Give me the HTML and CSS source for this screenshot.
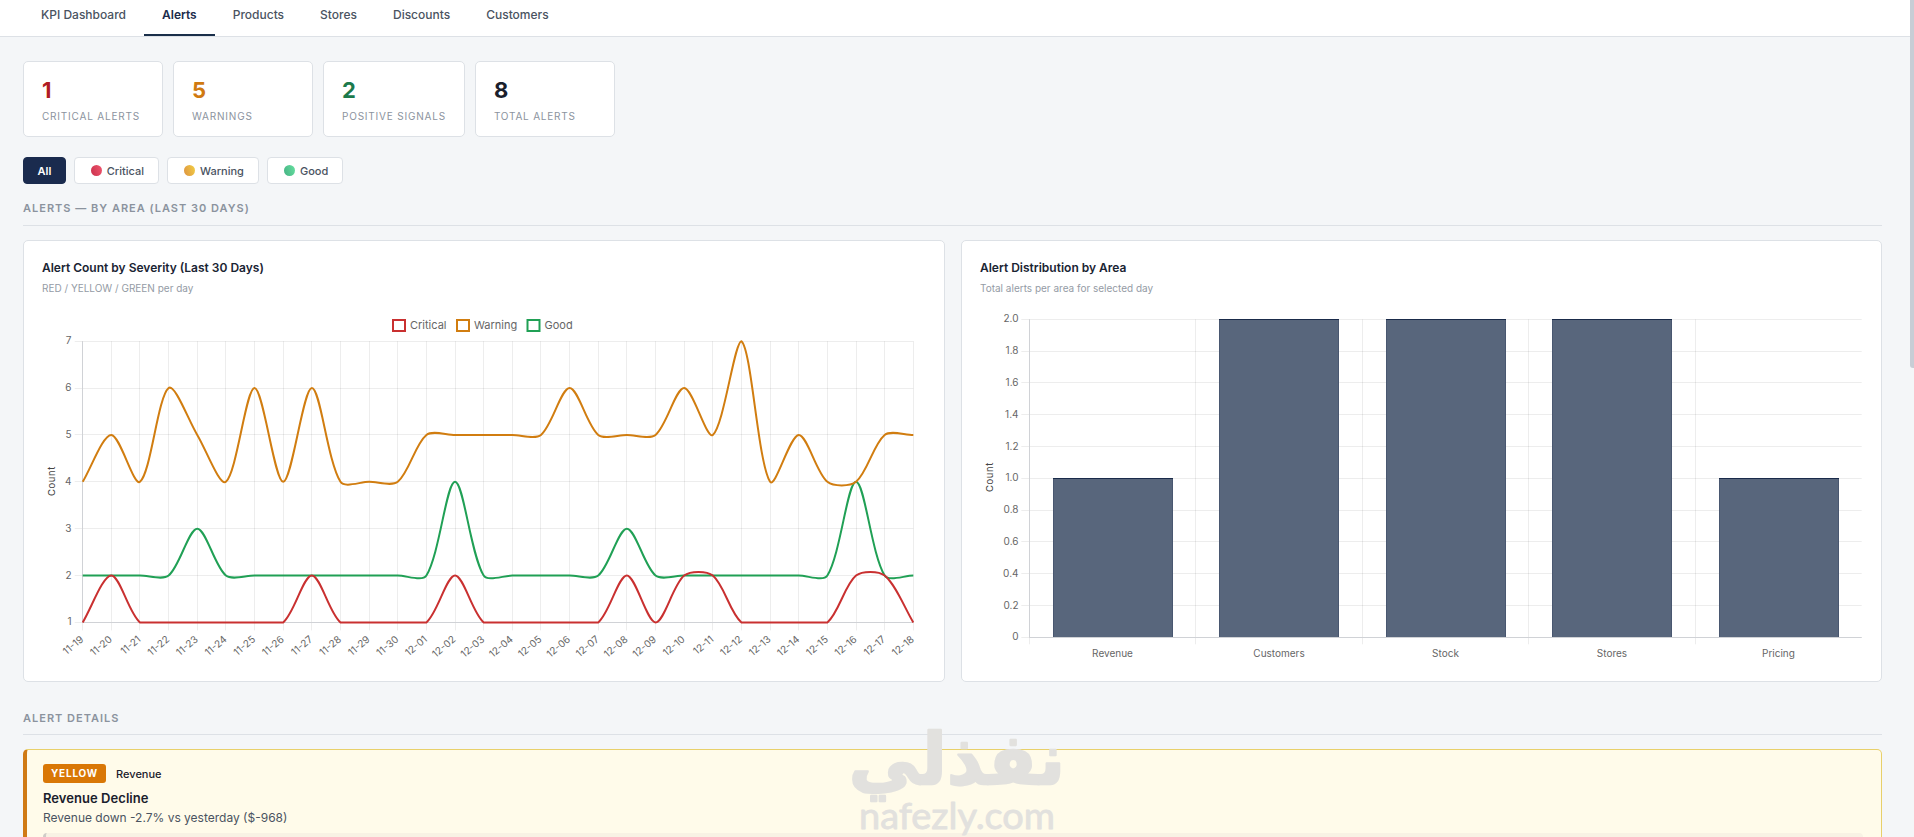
FILE: index.html
```html
<!DOCTYPE html>
<html lang="en">
<head>
  <meta charset="UTF-8" />
  <meta name="viewport" content="width=device-width, initial-scale=1.0"/>
  <title>Alerts</title>
  <link rel="stylesheet" href="styles.css">
</head>
<body>
  <nav class="tabs">
    <a class="tab">KPI Dashboard</a>
    <a class="tab active">Alerts</a>
    <a class="tab">Products</a>
    <a class="tab">Stores</a>
    <a class="tab">Discounts</a>
    <a class="tab">Customers</a>
  </nav>

  <main class="content">
    <div class="stats">
      <div class="stat">
        <div class="stat-value critical">1</div>
        <div class="stat-label">Critical Alerts</div>
      </div>
      <div class="stat">
        <div class="stat-value warning">5</div>
        <div class="stat-label">Warnings</div>
      </div>
      <div class="stat">
        <div class="stat-value good">2</div>
        <div class="stat-label">Positive Signals</div>
      </div>
      <div class="stat">
        <div class="stat-value">8</div>
        <div class="stat-label">Total Alerts</div>
      </div>
    </div>

    <div class="filters">
      <button class="filter active">All</button>
      <button class="filter"><span class="dot dot-red"></span>Critical</button>
      <button class="filter"><span class="dot dot-yellow"></span>Warning</button>
      <button class="filter"><span class="dot dot-green"></span>Good</button>
    </div>

    <h2 class="section-title">Alerts — By Area (Last 30 Days)</h2>

    <div class="charts">
      <div class="chart-card">
        <h3 class="chart-title">Alert Count by Severity (Last 30 Days)</h3>
        <p class="chart-sub">RED / YELLOW / GREEN per day</p>
        <svg class="chart" id="severityChart"></svg>
      </div>
      <div class="chart-card">
        <h3 class="chart-title">Alert Distribution by Area</h3>
        <p class="chart-sub">Total alerts per area for selected day</p>
        <svg class="chart" id="areaChart"></svg>
      </div>
    </div>

    <h2 class="section-title details-title">Alert Details</h2>

    <div class="alert-card">
      <div class="alert-head">
        <span class="badge">YELLOW</span>
        <span class="alert-area">Revenue</span>
      </div>
      <div class="alert-name">Revenue Decline</div>
      <div class="alert-text">Revenue down -2.7% vs yesterday ($-968)</div>
      <div class="alert-action"></div>
    </div>
  </main>

  <svg class="watermark" viewBox="0 0 230 160">
    <text class="wm-ar" transform="translate(115,104) scale(1.05,1.14)" text-anchor="middle" textLength="206" lengthAdjust="spacingAndGlyphs">نفذلي</text>
    <text class="wm-en" x="115" y="149" text-anchor="middle" textLength="196" lengthAdjust="spacingAndGlyphs">nafezly.com</text>
  </svg>
  <div class="scroll-thumb"></div>

  <script src="charts.js"></script>
</body>
</html>
```
FILE: styles.css
```css
* {
  box-sizing: border-box;
}
body {
  margin: 0;
  height: 837px;
  overflow: hidden;
  position: relative;
  font-family: Inter, "Liberation Sans", sans-serif;
  background: #f4f6f8;
  color: #1a202c;
}
.tabs {
  display: flex;
  height: 37px;
  padding-left: 23px;
  background: #fff;
  border-bottom: 1px solid #dde1e6;
}
.tab {
  padding: 6px 18px 10px;
  border-bottom: 2px solid transparent;
  font-size: 12px;
  font-weight: 500;
  line-height: 18px;
  color: #4a5361;
}
.tab.active {
  color: #1a2b4a;
  font-weight: 600;
  border-bottom-color: #1a2f4a;
}
.content {
  height: 800px;
  padding: 24px 32px 0 23px;
  overflow: hidden;
}
.stats {
  display: flex;
  gap: 10px;
}
.stat {
  min-width: 140px;
  height: 76px;
  padding: 14px 18px 0;
  background: #fff;
  border: 1px solid #dde1e6;
  border-radius: 5px;
}
.stat-value {
  font-size: 22px;
  font-weight: 700;
  line-height: 28px;
}
.stat-value.critical { color: #b01c24; }
.stat-value.warning { color: #d07a10; }
.stat-value.good { color: #1c7a4c; }
.stat-label {
  margin-top: 4px;
  font-size: 10px;
  line-height: 16px;
  letter-spacing: 0.8px;
  text-transform: uppercase;
  white-space: nowrap;
  color: #8b939e;
}
.filters {
  display: flex;
  gap: 8px;
  margin-top: 20px;
}
.filter {
  display: flex;
  align-items: center;
  height: 27px;
  padding: 0 14px;
  background: #fff;
  border: 1px solid #dde1e6;
  border-radius: 4px;
  font-family: inherit;
  font-size: 11px;
  font-weight: 500;
  color: #4a5361;
}
.filter.active {
  padding: 0 13.5px;
  background: #1a2b4e;
  border-color: #1a2b4e;
  color: #fff;
  font-weight: 600;
}
.dot {
  width: 11px;
  height: 11px;
  margin: 0 5px 0 2px;
  border-radius: 50%;
}
.dot-red { background: linear-gradient(70deg, #c9304c, #f0566e); }
.dot-yellow { background: linear-gradient(70deg, #dd9240, #f2cf45); }
.dot-green { background: linear-gradient(70deg, #45b183, #66e0a0); }
.section-title {
  margin: 16px 0 14px;
  padding-bottom: 8px;
  border-bottom: 1px solid #dde1e6;
  font-size: 11px;
  font-weight: 600;
  line-height: 17px;
  letter-spacing: 1px;
  text-transform: uppercase;
  color: #8b939e;
}
.details-title {
  margin-top: 28px;
  padding-bottom: 7px;
}
.charts {
  display: grid;
  grid-template-columns: 1fr 921px;
  gap: 16px;
}
.chart-card {
  padding: 18px;
  background: #fff;
  border: 1px solid #dde1e6;
  border-radius: 5px;
}
.chart-title {
  margin: 0;
  font-size: 12px;
  font-weight: 600;
  line-height: 18px;
  color: #1a2433;
}
.chart-sub {
  margin: 3px 0 13px;
  font-size: 10px;
  line-height: 16px;
  color: #949ba5;
}
.chart {
  display: block;
  width: 100%;
  height: 354px;
  overflow: visible;
  font-size: 10px;
}
.chart text { fill: #666; }
.chart .legend { font-size: 11px; }
.chart .axis-title { font-size: 9.5px; letter-spacing: 0.6px; fill: #444; }
.grid { stroke: rgba(0, 0, 0, 0.07); }
.axis { stroke: #d0d2d6; }
.line { fill: none; stroke-width: 2; }
.bar { fill: #58667c; }
.bar-edge { fill: none; stroke: #1a2b4a; }
.alert-card {
  height: 200px;
  padding: 14px 18px 0 16px;
  background: #fffbea;
  border: 1px solid #e8d06a;
  border-left: 4px solid #d07a14;
  border-radius: 5px;
}
.alert-head {
  display: flex;
  align-items: center;
  gap: 10px;
  height: 19px;
}
.badge {
  padding: 0 8px;
  background: #d97706;
  border-radius: 3px;
  font-size: 10px;
  font-weight: 700;
  line-height: 19px;
  letter-spacing: 0.8px;
  color: #fff;
}
.alert-area {
  font-size: 11px;
  font-weight: 500;
}
.alert-name {
  margin-top: 5px;
  font-size: 13px;
  font-weight: 600;
  line-height: 20px;
  letter-spacing: 0.05px;
}
.alert-text {
  margin-top: 1px;
  font-size: 12px;
  line-height: 18px;
  color: #4a5361;
}
.alert-action {
  height: 40px;
  margin-top: 6px;
  background: #f8f2e4;
  border-left: 3px solid #cfcdc8;
  border-radius: 4px;
}
.watermark {
  position: absolute;
  left: 842px;
  top: 680px;
  width: 230px;
  height: 160px;
  overflow: visible;
}
.watermark text {
  fill: #e2e1de;
  stroke: #e2e1de;
  stroke-linejoin: round;
}
.wm-ar {
  font: 700 62px "DejaVu Sans", sans-serif;
  stroke-width: 2;
}
.wm-en {
  font: 400 36px Lato, sans-serif;
  stroke-width: 0.8;
}
.scroll-thumb {
  position: absolute;
  right: 0;
  top: 0;
  width: 4px;
  height: 368px;
  background: #c8cdd5;
  border-bottom-left-radius: 3px;
}
```
FILE: charts.js
```js
const NS = 'http://www.w3.org/2000/svg';

function add(svg, tag, attrs, text) {
  const el = document.createElementNS(NS, tag);
  for (const key in attrs) el.setAttribute(key, attrs[key]);
  if (text !== undefined) el.textContent = text;
  svg.appendChild(el);
  return el;
}

function gridLine(svg, x1, y1, x2, y2, cls) {
  add(svg, 'line', { x1, y1, x2, y2, class: cls || 'grid' });
}

const crisp = (v) => Math.floor(v) + 0.5;

// smooth curve through the points, control points kept inside the plot area
function curvePath(pts, tension, top, bottom) {
  const clamp = (y) => Math.min(bottom, Math.max(top, y));
  const cps = pts.map((p, i) => {
    const prev = pts[i - 1] || p;
    const next = pts[i + 1] || p;
    const d01 = Math.hypot(p.x - prev.x, p.y - prev.y);
    const d12 = Math.hypot(next.x - p.x, next.y - p.y);
    const fa = tension * d01 / (d01 + d12);
    const fb = tension * d12 / (d01 + d12);
    return {
      ax: p.x - fa * (next.x - prev.x), ay: clamp(p.y - fa * (next.y - prev.y)),
      bx: p.x + fb * (next.x - prev.x), by: clamp(p.y + fb * (next.y - prev.y))
    };
  });
  let d = `M${pts[0].x},${pts[0].y}`;
  for (let i = 1; i < pts.length; i++) {
    d += `C${cps[i - 1].bx},${cps[i - 1].by} ${cps[i].ax},${cps[i].ay} ${pts[i].x},${pts[i].y}`;
  }
  return d;
}

function drawSeverity() {
  const svg = document.getElementById('severityChart');
  const left = 40.7, right = 871.3, top = 32.2, bottom = 313.4;
  const days = [];
  for (let d = 19; d <= 30; d++) days.push('11-' + d);
  for (let d = 1; d <= 18; d++) days.push('12-' + String(d).padStart(2, '0'));
  const x = (i) => left + i * (right - left) / (days.length - 1);
  const y = (v) => bottom - (v - 1) * (bottom - top) / 6;

  const series = [
    { name: 'Critical', color: '#c93030', lx: 351, tx: 368,
      data: [1,2,1,1,1,1,1,1,2,1,1,1,1,2,1,1,1,1,1,2,1,2,2,1,1,1,1,2,2,1] },
    { name: 'Warning', color: '#d17d10', lx: 415, tx: 432,
      data: [4,5,4,6,5,4,6,4,6,4,4,4,5,5,5,5,5,6,5,5,5,6,5,7,4,5,4,4,5,5] },
    { name: 'Good', color: '#20a055', lx: 485.5, tx: 502.5,
      data: [2,2,2,2,3,2,2,2,2,2,2,2,2,4,2,2,2,2,2,3,2,2,2,2,2,2,2,4,2,2] }
  ];

  days.forEach((day, i) => {
    gridLine(svg, crisp(x(i)), top, crisp(x(i)), bottom + 8);
    add(svg, 'text', {
      'text-anchor': 'end',
      transform: `translate(${x(i) + 1.5},${bottom + 18}) rotate(-40)`
    }, day);
  });
  for (let v = 1; v <= 7; v++) {
    gridLine(svg, left - 8, crisp(y(v)), right, crisp(y(v)));
    add(svg, 'text', { x: 29.5, y: y(v) + 3, 'text-anchor': 'end' }, v);
  }
  gridLine(svg, crisp(left), top, crisp(left), bottom, 'axis');
  gridLine(svg, left, crisp(bottom), right, crisp(bottom), 'axis');
  add(svg, 'text', {
    class: 'axis-title', 'text-anchor': 'middle', transform: 'translate(13,172) rotate(-90)'
  }, 'Count');

  [...series].reverse().forEach((s) => {
    const pts = s.data.map((v, i) => ({ x: x(i), y: y(v) }));
    add(svg, 'path', { class: 'line', stroke: s.color, d: curvePath(pts, 0.3, top, bottom) });
  });
  series.forEach((s) => {
    add(svg, 'rect', { x: s.lx, y: 11, width: 12, height: 11, fill: '#fff', stroke: s.color, 'stroke-width': 2 });
    add(svg, 'text', { class: 'legend', x: s.tx, y: 20.3 }, s.name);
  });
}

function drawAreas() {
  const svg = document.getElementById('areaChart');
  const left = 49.3, right = 881.7, top = 10.3, bottom = 328.3;
  const areas = [['Revenue', 1], ['Customers', 2], ['Stock', 2], ['Stores', 2], ['Pricing', 1]];
  const step = (right - left) / areas.length;
  const y = (v) => bottom - v * (bottom - top) / 2;

  for (let i = 0; i <= 10; i++) {
    const v = i / 5;
    gridLine(svg, left - 8, crisp(y(v)), right, crisp(y(v)));
    add(svg, 'text', { x: 38.5, y: y(v) + 3, 'text-anchor': 'end' }, i ? v.toFixed(1) : '0');
  }
  for (let i = 0; i < areas.length; i++) {
    gridLine(svg, crisp(left + i * step), top, crisp(left + i * step), bottom + 7);
  }
  gridLine(svg, crisp(left), top, crisp(left), bottom, 'axis');
  areas.forEach(([name, count], i) => {
    const bx = Math.round(left + i * step + step * 0.14);
    const bw = 120;
    const by = Math.floor(y(count));
    add(svg, 'rect', { class: 'bar', x: bx, y: by, width: bw, height: bottom - by });
    add(svg, 'path', { class: 'bar-edge', d: `M${bx},${by + 0.5}h${bw}` });
    add(svg, 'path', { class: 'bar-edge', 'stroke-opacity': 0.25, d: `M${bx + 0.5},${by + 1}V${bottom}M${bx + bw - 0.5},${by + 1}V${bottom}` });
    add(svg, 'text', { x: left + (i + 0.5) * step, y: bottom + 20, 'text-anchor': 'middle' }, name);
  });
  gridLine(svg, left, crisp(bottom), right, crisp(bottom), 'axis');
  add(svg, 'text', {
    class: 'axis-title', 'text-anchor': 'middle', transform: 'translate(13,168) rotate(-90)'
  }, 'Count');
}

drawSeverity();
drawAreas();
```
